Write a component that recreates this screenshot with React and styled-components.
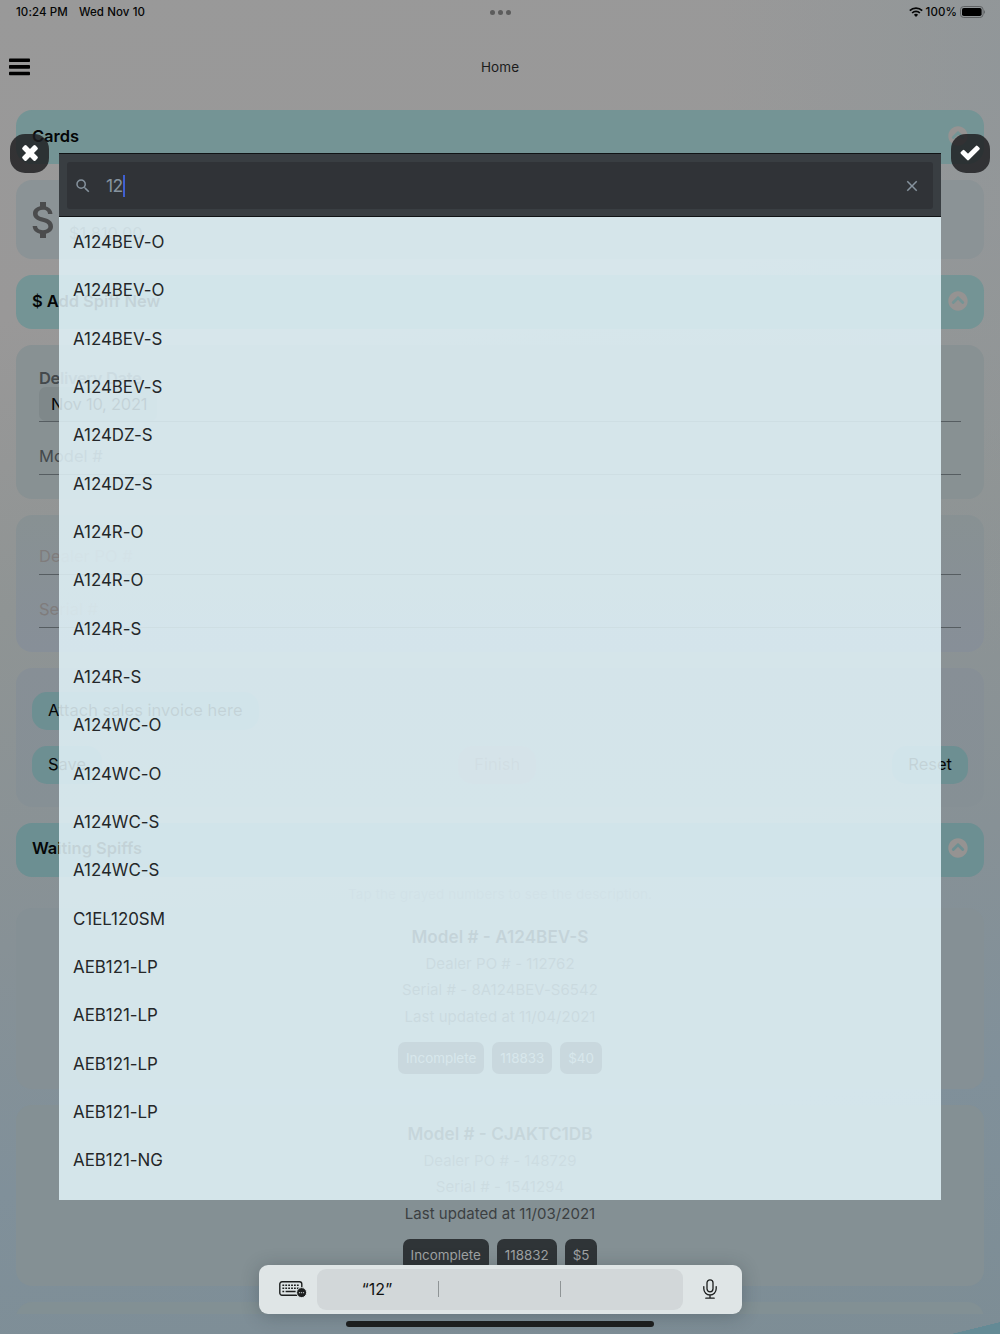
import styled, { createGlobalStyle } from "styled-components";
import { FaChevronCircleUp } from "react-icons/fa";
import { MdAttachMoney, MdClose, MdSearch } from "react-icons/md";

const GlobalStyle = createGlobalStyle`
  * {
    box-sizing: border-box;
  }
  body {
    margin: 0;
    font-family: Inter, "Liberation Sans", sans-serif;
    color: #050606;
  }
  svg {
    display: block;
  }
`;

const Screen = styled.div`
  position: relative;
  width: 1000px;
  height: 1334px;
  overflow: hidden;
  background:
    linear-gradient(to bottom right, transparent 50%, #648a95 51%) no-repeat right bottom / 49px 12px,
    radial-gradient(ellipse 280px 600px at 1000px 60px, rgba(143, 150, 153, 0.8), rgba(143, 150, 153, 0)),
    linear-gradient(173deg, #999999 0%, #999898 22%, #8f9494 42%, #879196 65%, #80909a 82%, #7d8d95 100%);
`;

/* ---- status bar and title ---- */

const StatusBar = styled.div`
  height: 24px;
  padding: 0 15px 0 16px;
  display: grid;
  grid-template-columns: 1fr auto 1fr;
  align-items: center;
  font-size: 11.5px;
  font-weight: 500;
  letter-spacing: 0.1px;
`;

const StatusTime = styled.div`
  display: flex;
  gap: 11px;
`;

const Dots = styled.div`
  display: flex;
  gap: 3px;

  span {
    width: 5px;
    height: 5px;
    border-radius: 50%;
    background: #5c5c5c;
  }
`;

const StatusRight = styled.div`
  display: flex;
  justify-content: flex-end;
  align-items: center;
  gap: 3px;
`;

const Nav = styled.div`
  height: 86px;
  padding: 0 9px 1px;
  display: grid;
  grid-template-columns: 1fr auto 1fr;
  align-items: center;
`;

const NavTitle = styled.div`
  font-size: 13.5px;
  letter-spacing: 0.1px;
  color: #1c1c1c;
`;

/* ---- page content ---- */

const Content = styled.div`
  height: 1204px;
  padding: 0 16px;
  overflow: hidden;
`;

const SectionHeader = styled.div`
  height: 54px;
  margin-bottom: 16px;
  padding: 0 16px 3px;
  display: flex;
  align-items: center;
  justify-content: space-between;
  border-radius: 16px;
  background: ${(props) => props.$bg || "#749495"};
  font-size: 16.5px;
  font-weight: 600;
  letter-spacing: -0.05px;

  svg {
    color: #959392;
  }
`;

const Card = styled.div`
  height: ${(props) => props.$height}px;
  margin-bottom: ${(props) => props.$gap || 16}px;
  padding: ${(props) => props.$padding || "0 23px"};
  border-radius: 16px;
  background: ${(props) => props.$bg};
`;

const Balance = styled.div`
  display: flex;
  align-items: center;
  height: 100%;
  color: #4b4c4d;
  font-size: 16.5px;

  svg {
    margin-left: -11px;
  }

  span {
    margin: 27px 0 0 1px;
  }
`;

const FieldLabel = styled.div`
  height: 17px;
  font-size: 16.5px;
  line-height: 17px;
  font-weight: 600;
  letter-spacing: -0.35px;
  color: #44494c;
`;

const DateRow = styled.div`
  height: 35px;
  border-bottom: 1px solid #565d61;
`;

const DatePill = styled.div`
  width: 118px;
  height: 34px;
  padding-left: 12px;
  border-radius: 7px;
  background: #7f888a;
  font-size: 16.5px;
  line-height: 34px;
  letter-spacing: -0.25px;
`;

const Field = styled.div`
  height: 53.3px;
  padding-top: 24px;
  border-bottom: 1px solid #565d61;
  color: ${(props) => props.$color || "#44494c"};
  font-size: 16.5px;
  line-height: 20px;
`;

const Pill = styled.div`
  width: fit-content;
  height: 38px;
  padding: 0 16px;
  border-radius: 15px;
  background: ${(props) => props.$bg || "#6d8f92"};
  color: ${(props) => props.$color || "#050606"};
  font-size: 16.5px;
  line-height: 37px;
`;

const PillRow = styled.div`
  display: flex;
  justify-content: space-between;
  margin-top: 16px;
`;

const Hint = styled.div`
  height: 23px;
  margin-top: -8px;
  text-align: center;
  font-size: 13.5px;
  line-height: 18px;
  letter-spacing: 0.05px;
  color: #6c767a;
`;

const Spiff = styled.div`
  display: flex;
  flex-direction: column;
  align-items: center;
  padding-top: 15px;
`;

const SpiffTitle = styled.div`
  height: 27px;
  font-size: 17.2px;
  line-height: 27px;
  font-weight: 600;
  color: ${(props) => props.$color};
`;

const SpiffLine = styled.div`
  height: 26.8px;
  font-size: 15px;
  line-height: 27px;
  letter-spacing: 0.03px;
  color: ${(props) => props.$color};
`;

const Chips = styled.div`
  display: flex;
  gap: 8px;
  margin-top: 12px;
`;

const Chip = styled.div`
  height: 32px;
  padding: 0 8px;
  border-radius: 7px;
  background: #2f3437;
  color: #a0a3a4;
  font-size: 13.4px;
  line-height: 32px;
`;

/* ---- picker over the page ---- */

const Picker = styled.div`
  position: absolute;
  left: 59px;
  top: 153px;
  width: 882px;
  height: 1047px;
  background: rgba(224, 241, 247, 0.87);
  overflow: hidden;
`;

const SearchBar = styled.div`
  height: 64px;
  margin-bottom: 1px;
  padding: 8px;
  background: #393e42;
  border-top: 1px solid #101315;
  border-bottom: 1px solid #101315;
`;

const SearchInput = styled.div`
  height: 47px;
  padding: 0 12px 0 7px;
  display: flex;
  align-items: center;
  border-radius: 3px;
  background: #303337;
  color: #86939e;
  font-size: 17.5px;
`;

const Query = styled.div`
  flex: 1;
  display: flex;
  align-items: center;
  margin-left: 14px;
  letter-spacing: -0.6px;
`;

const Caret = styled.span`
  width: 2px;
  height: 22px;
  background: #3f5fd0;
`;

const Option = styled.div`
  height: 48.33px;
  padding-left: 14px;
  font-size: 16.9px;
  line-height: 48px;
  letter-spacing: -0.02px;
  color: #242729;
`;

const RoundButton = styled.div`
  position: absolute;
  top: 133.5px;
  ${(props) => props.$side}: 10px;
  width: 39px;
  height: 39px;
  display: flex;
  align-items: center;
  justify-content: center;
  border-radius: 15px;
  background: rgba(28, 28, 30, 0.82);
`;

/* ---- keyboard bar ---- */

const KeyboardBar = styled.div`
  position: absolute;
  left: 258.5px;
  top: 1265px;
  width: 483px;
  height: 48.5px;
  padding: 4px 24px 4px 20px;
  display: flex;
  align-items: center;
  border-radius: 9px;
  background: #dfe5e6;
  box-shadow: 0 2px 18px rgba(30, 40, 45, 0.28);
`;

const Suggestions = styled.div`
  width: 366px;
  height: 41px;
  margin: 0 20px 0 10px;
  display: grid;
  grid-template-columns: repeat(3, 1fr);
  align-items: center;
  border-radius: 9px;
  background: #d2d7d9;
`;

const Suggestion = styled.div`
  height: 16px;
  border-right: ${(props) => (props.$last ? "none" : "1px solid #8f9496")};
  text-align: center;
  font-size: 16px;
  line-height: 16px;
  color: #111;
`;

const HomeIndicator = styled.div`
  position: absolute;
  left: 346px;
  top: 1321px;
  width: 308px;
  height: 5.5px;
  border-radius: 3px;
  background: #1c1e1e;
`;

const options = [
  "A124BEV-O",
  "A124BEV-O",
  "A124BEV-S",
  "A124BEV-S",
  "A124DZ-S",
  "A124DZ-S",
  "A124R-O",
  "A124R-O",
  "A124R-S",
  "A124R-S",
  "A124WC-O",
  "A124WC-O",
  "A124WC-S",
  "A124WC-S",
  "C1EL120SM",
  "AEB121-LP",
  "AEB121-LP",
  "AEB121-LP",
  "AEB121-LP",
  "AEB121-NG",
];

const MenuIcon = () => (
  <svg width="21" height="18" viewBox="0 0 21 18">
    <rect y="0.5" width="21" height="3.6" rx="0.8" />
    <rect y="7.1" width="21" height="3.6" rx="0.8" />
    <rect y="13.7" width="21" height="3.6" rx="0.8" />
  </svg>
);

const WifiIcon = () => (
  <svg width="14" height="10" viewBox="0 0 14 10" fill="none" stroke="#050606" strokeWidth="1.7">
    <path d="M0.8 3.7a8.8 8.8 0 0 1 12.4 0" />
    <path d="M3.1 6a5.6 5.6 0 0 1 7.8 0" />
    <path d="M7 9.9 4.9 7.8a3 3 0 0 1 4.2 0z" fill="#050606" stroke="none" />
  </svg>
);

const BatteryIcon = () => (
  <svg width="25" height="12" viewBox="0 0 25 12">
    <rect x="0.5" y="0.5" width="22.6" height="11" rx="3.2" fill="none" stroke="#5f6264" />
    <rect x="2" y="2" width="19.6" height="8" rx="1.8" />
    <path d="M24 4.2v3.6c1.3-.6 1.3-3 0-3.6z" fill="#5f6264" />
  </svg>
);

const CrossIcon = () => (
  <svg width="20" height="20" viewBox="-10 -10 20 20" fill="#fff">
    <rect x="-9.2" y="-2.8" width="18.4" height="5.6" rx="1.5" transform="rotate(45)" />
    <rect x="-9.2" y="-2.8" width="18.4" height="5.6" rx="1.5" transform="rotate(-45)" />
  </svg>
);

const CheckIcon = () => (
  <svg width="20.3" height="16" viewBox="0 0 20.3 16" fill="#fff" stroke="#fff" strokeWidth="2.4" strokeLinejoin="round">
    <path d="M1.73 7.87 3.57 6.03 8 10.46 16.73 1.73 18.57 3.57 8 14.14z" />
  </svg>
);

const KeyboardIcon = () => (
  <svg width="28" height="17" viewBox="0 0 28 17" fill="none" stroke="#1c1e1e">
    <rect x="0.8" y="0.8" width="22" height="13.4" rx="2.2" strokeWidth="1.4" />
    <path d="M3.4 4.2h17M3.4 7.2h17" strokeWidth="1.6" strokeDasharray="1.8 1.1" />
    <path d="M3.4 10.6h1.8M6.6 10.6h10" strokeWidth="1.5" />
    <circle cx="22.6" cy="11.6" r="5" fill="#1c1e1e" stroke="#dfe5e6" strokeWidth="1" />
    <path d="M19.9 11.6h6" strokeWidth="1.3" strokeDasharray="1.2 0.8" stroke="#a9aeaf" />
  </svg>
);

const MicIcon = () => (
  <svg width="14" height="20" viewBox="0 0 14 20" fill="none" stroke="#1c1e1e" strokeWidth="1.3" strokeLinecap="round">
    <rect x="4" y="0.8" width="6" height="12" rx="3" />
    <path d="M0.8 7.6v2.2a6.2 6.2 0 0 0 12.4 0V7.6M7 16v3M2.8 19.2h8.4" />
  </svg>
);

const Header = ({ title, bg }) => (
  <SectionHeader $bg={bg}>
    {title}
    <FaChevronCircleUp size={20} />
  </SectionHeader>
);

const SpiffInfo = ({ model, po, serial, updated, chips, color, soft }) => (
  <Spiff>
    <SpiffTitle $color={color}>Model # - {model}</SpiffTitle>
    <SpiffLine $color={soft}>Dealer PO # - {po}</SpiffLine>
    <SpiffLine $color={soft}>Serial # - {serial}</SpiffLine>
    <SpiffLine $color="#3c4042">Last updated at {updated}</SpiffLine>
    <Chips>
      {chips.map((chip) => (
        <Chip key={chip}>{chip}</Chip>
      ))}
    </Chips>
  </Spiff>
);

const App = () => {
  return (
    <Screen>
      <GlobalStyle />
      <StatusBar>
        <StatusTime>
          <span>10:24 PM</span>
          <span>Wed Nov 10</span>
        </StatusTime>
        <Dots>
          <span />
          <span />
          <span />
        </Dots>
        <StatusRight>
          <WifiIcon />
          <span>100%</span>
          <BatteryIcon />
        </StatusRight>
      </StatusBar>
      <Nav>
        <MenuIcon />
        <NavTitle>Home</NavTitle>
      </Nav>

      <Content>
        <Header title="Cards" />
        <Card $height={79} $bg="#8b9396" $padding="0 15px">
          <Balance>
            <MdAttachMoney size={48} />
            <span>$1,810.00</span>
          </Balance>
        </Card>

        <Header title="$ Add Spiff New" />
        <Card $height={153.5} $bg="#889193" $padding="24.5px 23px">
          <FieldLabel>Delivery Date</FieldLabel>
          <DateRow>
            <DatePill>Nov 10, 2021</DatePill>
          </DateRow>
          <Field>Model #</Field>
        </Card>
        <Card $height={137.5} $bg="linear-gradient(#889193, #878f98)" $padding="7px 23px">
          <Field $color="#7f7c7c">Dealer PO #</Field>
          <Field $color="#7f7c7c">Serial #</Field>
        </Card>
        <Card $height={138.5} $bg="linear-gradient(#878f96, #869095)" $padding="23.5px 16px">
          <Pill>Attach sales invoice here</Pill>
          <PillRow>
            <Pill>Save</Pill>
            <Pill $bg="#8a868e" $color="#6e5a60">Finish</Pill>
            <Pill>Reset</Pill>
          </PillRow>
        </Card>

        <Header title="Waiting Spiffs" bg="#6c8f92" />
        <Hint>Tap the grayed numbers to see the description.</Hint>
        <Card $height={181.5} $gap={15.5} $bg="#859095" $padding="0">
          <SpiffInfo
            model="A124BEV-S"
            po="112762"
            serial="8A124BEV-S6542"
            updated="11/04/2021"
            chips={["Incomplete", "118833", "$40"]}
            color="#0c0f10"
            soft="#3c4042"
          />
        </Card>
        <Card $height={181} $bg="#849094" $padding="0">
          <SpiffInfo
            model="CJAKTC1DB"
            po="148729"
            serial="1541294"
            updated="11/03/2021"
            chips={["Incomplete", "118832", "$5"]}
            color="#1d2122"
            soft="#4a5052"
          />
        </Card>
        <Card $height={181} $bg="#829094" $padding="0" />
      </Content>

      <Picker>
        <SearchBar>
          <SearchInput>
            <MdSearch size={18} />
            <Query>
              12
              <Caret />
            </Query>
            <MdClose size={18} />
          </SearchInput>
        </SearchBar>
        {options.map((option, i) => (
          <Option key={i}>{option}</Option>
        ))}
      </Picker>
      <RoundButton $side="left">
        <CrossIcon />
      </RoundButton>
      <RoundButton $side="right">
        <CheckIcon />
      </RoundButton>

      <KeyboardBar>
        <KeyboardIcon />
        <Suggestions>
          <Suggestion>“12”</Suggestion>
          <Suggestion />
          <Suggestion $last />
        </Suggestions>
        <MicIcon />
      </KeyboardBar>
      <HomeIndicator />
    </Screen>
  );
};

export default App;
